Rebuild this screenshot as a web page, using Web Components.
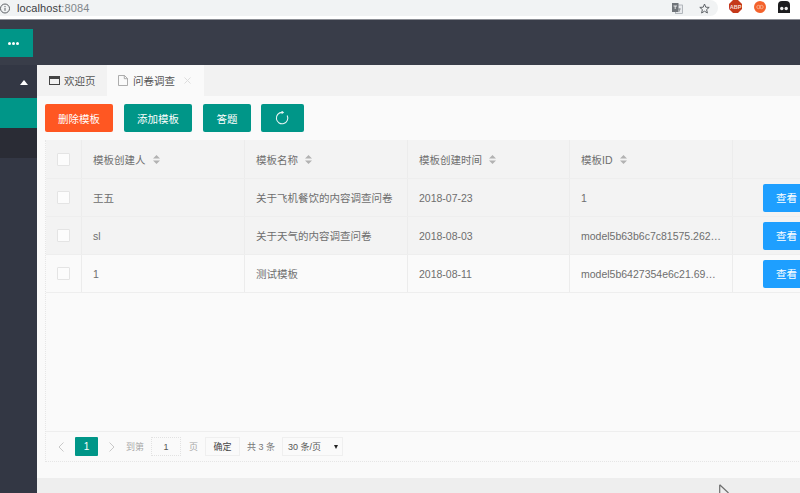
<!DOCTYPE html>
<html lang="zh">
<head>
<meta charset="utf-8">
<title>问卷调查</title>
<style>
    html, body { margin: 0; height: 100%; overflow: hidden; }
    body { font-family: "Liberation Sans", "Noto Sans CJK SC", sans-serif; font-size: 10.5px; color: #666; }
</style>
</head>
<body>
<app-shell>
    <browser-bar slot="browser"></browser-bar>
    <side-nav slot="nav"></side-nav>
    <tab-bar></tab-bar>
    <tool-bar></tool-bar>
    <data-table></data-table>
</app-shell>
<script>
(function() {
    function define(name, css, html) {
        customElements.define(name, class extends HTMLElement {
            constructor() {
                super();
                this.attachShadow({ mode: 'open' });
                this.shadowRoot.innerHTML = `<style>${css}</style>${html}`;
            }
        });
    }

    define('app-shell', `
        :host { display: flex; flex-direction: column; width: 800px; height: 493px; overflow: hidden; background: #393d49; position: relative; }
        .top { height: 45px; flex: none; display: flex; align-items: flex-start; padding-top: 9px; box-sizing: border-box; background: #393d49; }
        .tile { width: 33px; height: 28px; padding-right: 6px; box-sizing: border-box; background: #009688; display: flex; align-items: center; justify-content: center; gap: 1px; }
        .tile i { width: 3px; height: 3px; border-radius: 50%; background: #fff; }
        .body { flex: 1; display: flex; min-height: 0; }
        .main { flex: 1; min-width: 0; display: flex; flex-direction: column; background: #fafafa; }
        .foot { height: 15px; flex: none; background: #eeeeee; margin-top: auto; }
        svg { position: absolute; left: 719px; top: 484px; }
    `, `
        <slot name="browser"></slot>
        <div class="top"><div class="tile"><i></i><i></i><i></i></div></div>
        <div class="body">
            <slot name="nav"></slot>
            <div class="main"><slot></slot><div class="foot"></div></div>
        </div>
        <svg width="12" height="9" viewBox="0 0 12 9"><path d="M.7.7V9M.7.7 9.5 9" fill="#fff" stroke="#6e6e6e" stroke-width="1.2"/></svg>
    `);

    define('browser-bar', `
        :host { display: flex; align-items: flex-start; height: 20px; flex: none; background: #fff; border-bottom: 1px solid #8d8f96; box-sizing: border-box; }
        .omni { height: 16px; width: 718px; flex: none; background: #f1f3f4; border-radius: 0 10px 10px 0; display: flex; align-items: center; font-size: 11px; color: #3c4043; gap: 6px; box-sizing: border-box; }
        .omni b { font-weight: normal; color: #80868b; }
        .host { flex: 1; letter-spacing: .1px; }
        .ext { flex: 1; display: flex; align-items: center; justify-content: space-between; height: 13px; padding: 0 10px 0 11px; }
        svg { display: block; flex: none; }
        .star { margin: 0 8px 0 10px; }
        text { font-family: "Liberation Sans", sans-serif; font-weight: bold; font-size: 5.5px; fill: #f3ddd6; }
    `, `
        <div class="omni">
            <svg width="11" height="11" viewBox="0 0 11 11"><circle cx="5" cy="5.5" r="4.5" fill="none" stroke="#5f6368"/><path d="M5 4.8v3M5 3v1" stroke="#5f6368"/></svg>
            <span class="host">localhost<b>:8084</b></span>
            <svg width="11" height="11" viewBox="0 0 11 11"><rect x="3.5" y="2" width="7" height="8.5" fill="#e8eaed" stroke="#9aa0a6" stroke-width=".7"/><rect width="6.5" height="9" y="0" fill="#70757a"/><path d="M1.5 3h3.5M3.2 3v3" stroke="#fff" stroke-width=".8"/><path d="M6 6h3M7.5 5.5v3" stroke="#70757a" stroke-width=".6"/></svg>
            <svg class="star" width="11" height="11" viewBox="0 0 11 11"><path d="M5.5 1 6.8 4.2 10.2 4.4 7.6 6.6 8.4 10 5.5 8.2 2.6 10 3.4 6.6.8 4.4 4.2 4.2Z" fill="none" stroke="#5f6368" stroke-width="1"/></svg>
        </div>
        <div class="ext">
            <svg width="13" height="13" viewBox="0 0 13 13"><path d="M4 0h5l4 4v5l-4 4H4L0 9V4Z" fill="#c5391a"/><text x="6.5" y="8.5" text-anchor="middle">ABP</text></svg>
            <svg width="12" height="12" viewBox="0 0 12 12"><circle cx="6" cy="6" r="6" fill="#f4622c"/><circle cx="4.5" cy="6" r="1.7" fill="none" stroke="#fbc4a8" stroke-width=".7"/><circle cx="7.5" cy="6" r="1.7" fill="none" stroke="#fbc4a8" stroke-width=".7"/></svg>
            <svg width="12" height="12" viewBox="0 0 12 12"><path d="M0 12V4a4 4 0 0 1 4-4h4a4 4 0 0 1 4 4v8Z" fill="#1d1d1f"/><circle cx="3.8" cy="7.5" r="1.7" fill="#eee"/><circle cx="8.2" cy="7.5" r="1.7" fill="#eee"/></svg>
        </div>
    `);

    define('side-nav', `
        :host { display: block; width: 37px; flex: none; background: #333744; }
        .head { height: 33px; position: relative; }
        .head i { position: absolute; left: 20px; top: 15px; border: 4.5px solid transparent; border-top: 0; border-bottom: 5px solid #fff; }
        .on { height: 30px; background: #009688; }
        .sub { height: 30px; background: #2a2c35; }
    `, `<div class="head"><i></i></div><div class="on"></div><div class="sub"></div>`);

    define('tab-bar', `
        :host { display: flex; height: 31px; flex: none; background: #f2f2f2; font-size: 10.5px; color: #555; }
        .tab { display: flex; align-items: center; box-sizing: border-box; }
        .first { width: 70px; padding-left: 12px; gap: 4px; }
        .cur { width: 97px; padding-left: 11px; background: #fafafa; gap: 5px; }
        .x { margin-left: 4px; }
        svg { display: block; flex: none; }
    `, `
        <div class="tab first">
            <svg width="11" height="9" viewBox="0 0 11 9"><rect x=".5" y=".5" width="10" height="8" fill="none" stroke="#444"/><rect width="11" height="3" fill="#444"/></svg>
            <span>欢迎页</span>
        </div>
        <div class="tab cur">
            <svg width="10" height="11" viewBox="0 0 10 11"><path d="M.5.5h6l3 3v7h-9Z" fill="none" stroke="#999" stroke-width=".8"/><path d="M6.3.5v3.2h3.2" fill="none" stroke="#999" stroke-width=".8"/></svg>
            <span>问卷调查</span>
            <svg class="x" width="7" height="7" viewBox="0 0 7 7"><path d="M.5.5l6 6M6.5.5l-6 6" stroke="#ddd"/></svg>
        </div>
    `);

    define('tool-bar', `
        :host { display: flex; padding: 8px 0 8px 8px; flex: none; }
        button { height: 28px; border: 0; border-radius: 2px; background: #009688; color: #fff; font: inherit; font-size: 10.5px; padding: 0; display: flex; align-items: center; justify-content: center; }
        .del { width: 68px; background: #ff5722; margin-right: 11px; }
        .add { width: 68px; margin-right: 11px; }
        .ans { width: 48px; margin-right: 10px; }
        .ref { width: 43px; }
        .ref svg { margin-right: 2px; }
    `, `
        <button class="del">删除模板</button>
        <button class="add">添加模板</button>
        <button class="ans">答题</button>
        <button class="ref"><svg width="14" height="14" viewBox="0 0 14 14"><path d="M12.2 4.6A5.7 5.7 0 1 1 7 1.4" fill="none" stroke="#e6f5f3" stroke-width="1.1"/><path d="M6.6-.4 9.2 1.4 6.6 3.2Z" fill="#e6f5f3"/></svg></button>
    `);

    const rows = [
        ['王五', '关于飞机餐饮的内容调查问卷', '2018-07-23', '1'],
        ['sl', '关于天气的内容调查问卷', '2018-08-03', 'model5b63b6c7c81575.262…'],
        ['1', '测试模板', '2018-08-11', 'model5b6427354e6c21.69…']
    ];
    const heads = ['模板创建人', '模板名称', '模板创建时间', '模板ID'];
    const box = '<span class="check"></span>';
    const sort = '<svg class="sort" width="7" height="9" viewBox="0 0 7 9"><path d="M3.5 0 7 3.6H0ZM3.5 9 0 5.4H7Z" fill="#b2b2b2"/></svg>';

    define('data-table', `
        :host { display: block; margin-left: 8px; height: 322px; width: 800px; flex: none; box-sizing: border-box; border: 1px dotted #e6e6e6; border-width: 0 0 1px 1px; }
        .wrap { display: flex; flex-direction: column; height: 100%; }
        .row { display: grid; grid-template-columns: 36px 163px 163px 162px 163px 1fr; height: 38px; flex: none; box-sizing: border-box; border-bottom: 1px solid #eeeeee; }
        .row.head { height: 39px; }
        .shade { background: #f3f3f3; }
        .cell { display: flex; align-items: center; padding-left: 11px; border-right: 1px solid #ececec; box-sizing: border-box; white-space: nowrap; overflow: hidden; color: #6e6e6e; }
        .cell:last-child { border-right: 0; padding-left: 30px; }
        .check { width: 13px; height: 13px; box-sizing: border-box; border: 1px solid #e4e4e4; background: #fcfcfc; border-radius: 1px; flex: none; }
        .sort { margin-left: 7px; flex: none; }
        .see { width: 60px; height: 28px; flex: none; background: #1e9fff; color: #fff; border-radius: 2px 0 0 2px; display: flex; align-items: center; padding-left: 13px; box-sizing: border-box; }
        pager-bar { margin-top: auto; }
    `, `
        <div class="wrap">
            <div class="row head shade">
                <div class="cell">${box}</div>
                ${heads.map(h => `<div class="cell">${h}${sort}</div>`).join('')}
                <div class="cell"></div>
            </div>
            ${rows.map((r, i) => `
                <div class="row ${i < 2 ? 'shade' : ''}">
                    <div class="cell">${box}</div>
                    ${r.map(c => `<div class="cell">${c}</div>`).join('')}
                    <div class="cell"><span class="see">查看</span></div>
                </div>
            `).join('')}
            <pager-bar></pager-bar>
        </div>
    `);

    define('pager-bar', `
        :host { display: flex; align-items: center; height: 30px; flex: none; border-top: 1px solid #eeeeee; color: #a8a8a8; font-size: 9px; box-sizing: border-box; padding-left: 12px; }
        svg { display: block; flex: none; }
        .cur { width: 23px; height: 19px; background: #009688; color: #fff; display: flex; align-items: center; justify-content: center; border-radius: 1px; margin: 0 11px; font-size: 10px; }
        .to { margin: 0 7px 0 11px; }
        .in { width: 30px; height: 19px; border: 1px dotted #e2e2e2; box-sizing: border-box; color: #555; display: flex; align-items: center; justify-content: center; }
        .pg { margin: 0 7px 0 8px; }
        .ok { width: 35px; height: 19px; border: 1px solid #efefef; color: #444; box-sizing: border-box; display: flex; align-items: center; justify-content: center; }
        .total { margin: 0 7px; color: #777; }
        .size { width: 61px; height: 19px; border: 1px solid #efefef; color: #555; box-sizing: border-box; display: flex; align-items: center; justify-content: space-between; padding: 0 4px 0 5px; }
        .size i { border: 2.5px solid transparent; border-top: 4px solid #222; border-bottom: 0; }
    `, `
        <svg width="6" height="10" viewBox="0 0 6 10"><path d="M5.5.5 1 5 5.5 9.5" fill="none" stroke="#c8c8c8"/></svg>
        <span class="cur">1</span>
        <svg width="6" height="10" viewBox="0 0 6 10"><path d="M.5.5 5 5 .5 9.5" fill="none" stroke="#c8c8c8"/></svg>
        <span class="to">到第</span>
        <span class="in">1</span>
        <span class="pg">页</span>
        <span class="ok">确定</span>
        <span class="total">共 3 条</span>
        <span class="size">30 条/页<i></i></span>
    `);
})();
</script>
</body>
</html>
